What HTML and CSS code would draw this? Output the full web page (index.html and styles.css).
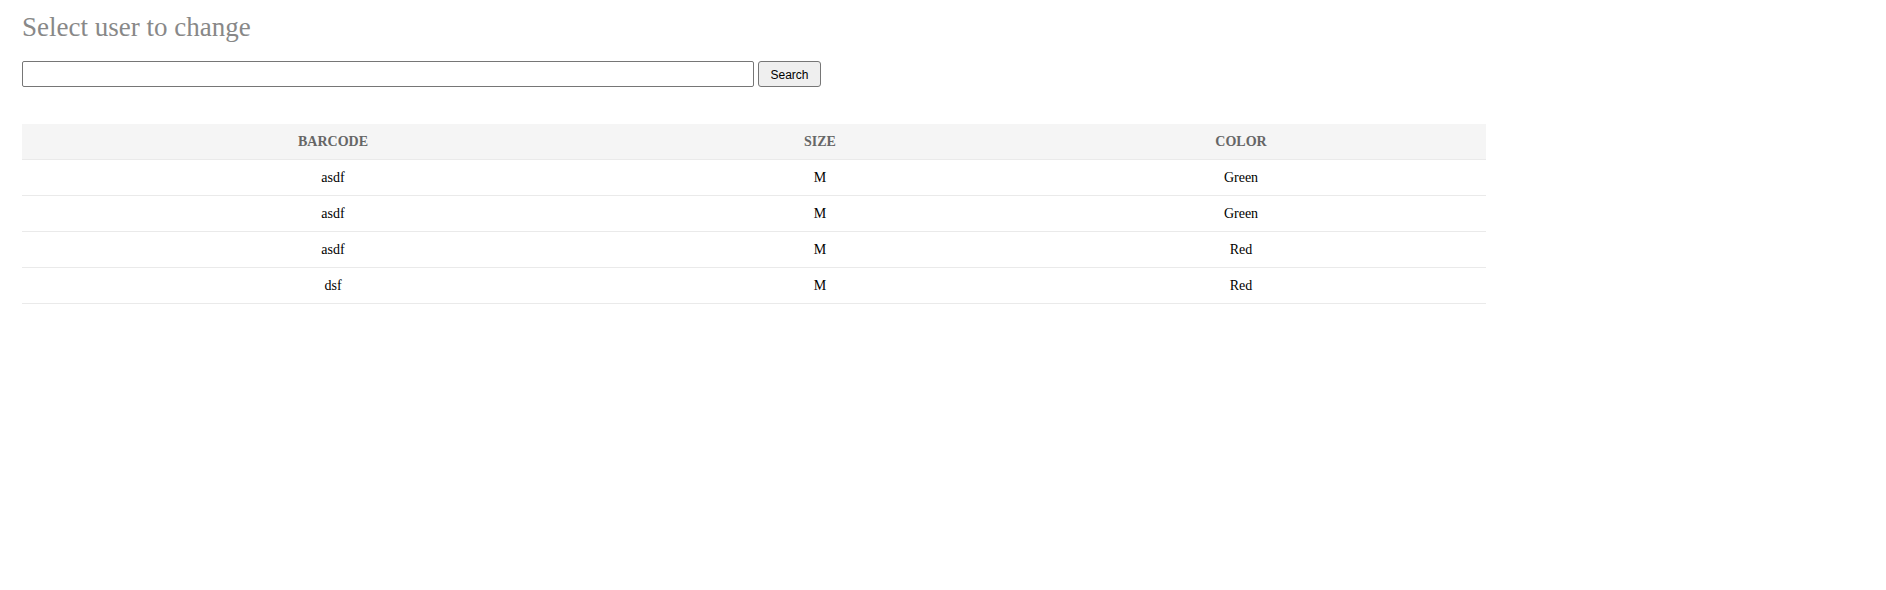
FILE: index.html
```html
<!DOCTYPE html>
<html>
<head>
<meta charset="utf-8">
<title>Select user to change</title>
<link rel="stylesheet" href="styles.css">
</head>
<body>
<div class="page">
  <h1 class="title">Select user to change</h1>
  <form class="search">
    <input class="search-input" type="text"><button class="search-btn" type="button">Search</button>
  </form>
  <table class="results">
    <colgroup>
      <col class="c1"><col class="c2"><col class="c3">
    </colgroup>
    <thead>
      <tr><th>BARCODE</th><th>SIZE</th><th>COLOR</th></tr>
    </thead>
    <tbody>
      <tr><td>asdf</td><td>M</td><td>Green</td></tr>
      <tr><td>asdf</td><td>M</td><td>Green</td></tr>
      <tr><td>asdf</td><td>M</td><td>Red</td></tr>
      <tr><td>dsf</td><td>M</td><td>Red</td></tr>
    </tbody>
  </table>
</div>
</body>
</html>
```

FILE: styles.css
```css
html, body {
  margin: 0;
  padding: 0;
  background: #fff;
}
.page {
  padding: 12px 22px 0 22px;
  font-family: "Liberation Serif", "Times New Roman", serif;
}
.title {
  margin: 0;
  font-size: 27px;
  font-weight: normal;
  line-height: 30px;
  color: #888;
}
.search {
  margin: 19px 0 0 0;
  display: flex;
  align-items: stretch;
  gap: 4px;
  height: 26px;
}
.search-input {
  box-sizing: border-box;
  width: 732px;
  height: 26px;
  margin: 0;
  border: 1px solid #767676;
  border-radius: 2px;
  padding: 1px 4px;
  font-family: "Liberation Sans", Arial, sans-serif;
  font-size: 13px;
  background: #fff;
}
.search-btn {
  box-sizing: border-box;
  width: 63px;
  height: 26px;
  margin: 0;
  border: 1px solid #767676;
  border-radius: 3px;
  background: #efefef;
  color: #000;
  font-family: "Liberation Sans", Arial, sans-serif;
  font-size: 12px;
  padding: 2px 0 0 0;
}
.results {
  margin-top: 37px;
  width: 1464px;
  border-collapse: collapse;
  table-layout: fixed;
}
.c1 { width: 622px; }
.c2 { width: 352px; }
.c3 { width: 490px; }
.results th,
.results td {
  height: 35px;
  padding: 0;
  text-align: center;
  vertical-align: middle;
  font-size: 14px;
  border-bottom: 1px solid #eaeaea;
}
.results th {
  background: #f5f5f5;
  color: #666;
  font-weight: bold;
}
.results td {
  color: #000;
}
```
